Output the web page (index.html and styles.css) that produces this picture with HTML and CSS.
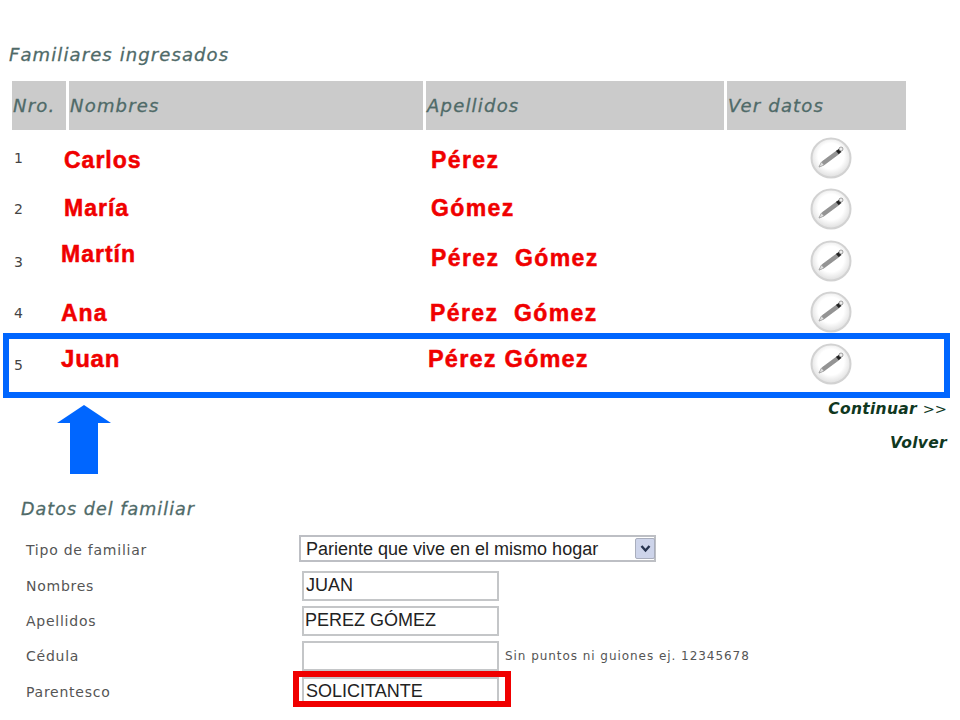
FILE: index.html
```html
<!DOCTYPE html>
<html lang="en">
<head>
    <meta charset="UTF-8" />
    <title>Familiares ingresados</title>
    <link rel="stylesheet" href="styles.css">
</head>
<body>

<!-- pencil button used by every row -->
<svg class="defs" width="0" height="0">
    <defs>
        <radialGradient id="knob" cx="50%" cy="45%" r="55%">
            <stop offset="0.6" stop-color="#ffffff"/>
            <stop offset="1" stop-color="#dedede"/>
        </radialGradient>
    </defs>
    <symbol id="pencil" viewBox="0 0 42 42">
        <circle cx="21" cy="21" r="19.5" fill="url(#knob)" stroke="#d2d2d2" stroke-width="2"/>
        <path d="M9 30 L11.5 25 L27 13.5 L29.5 16.5 L14 28 Z" fill="#949494" stroke="#7a7a7a" stroke-width="0.5"/>
        <path d="M9 30 L11.5 25 L14 28 Z" fill="#e0e0e0" stroke="#9a9a9a" stroke-width="0.5"/>
        <path d="M26 14 L29 11.8 L31.5 15 L28.6 17 Z" fill="#222222"/>
        <circle cx="31" cy="12" r="2" fill="#eeeeee" stroke="#666" stroke-width="0.6"/>
    </symbol>
</svg>

<h2 class="section-title">Familiares ingresados</h2>

<div class="table-head">
    <div>Nro.</div>
    <div>Nombres</div>
    <div>Apellidos</div>
    <div>Ver datos</div>
</div>

<div class="rows">
    <div class="row row-1">
        <span class="num">1</span>
        <span class="name">Carlos</span>
        <span class="surname">Pérez</span>
        <svg class="edit"><use href="#pencil"/></svg>
    </div>
    <div class="row row-2">
        <span class="num">2</span>
        <span class="name">María</span>
        <span class="surname">Gómez</span>
        <svg class="edit"><use href="#pencil"/></svg>
    </div>
    <div class="row row-3">
        <span class="num">3</span>
        <span class="name">Martín</span>
        <span class="surname">Pérez&nbsp; Gómez</span>
        <svg class="edit"><use href="#pencil"/></svg>
    </div>
    <div class="row row-4">
        <span class="num">4</span>
        <span class="name">Ana</span>
        <span class="surname">Pérez&nbsp; Gómez</span>
        <svg class="edit"><use href="#pencil"/></svg>
    </div>
    <div class="row row-5">
        <span class="num">5</span>
        <span class="name">Juan</span>
        <span class="surname">Pérez Gómez</span>
        <svg class="edit"><use href="#pencil"/></svg>
    </div>
</div>

<div class="links">
    <a href="#">Continuar <span class="arrows">&gt;&gt;</span></a>
    <a href="#">Volver</a>
</div>

<h2 class="section-title sub">Datos del familiar</h2>

<form class="family-form">
    <label>Tipo de familiar</label>
    <div class="select-wrap">
        <select>
            <option>Pariente que vive en el mismo hogar</option>
        </select>
        <span class="select-btn">
            <svg width="11" height="9" viewBox="0 0 11 9"><path d="M1.5 2 L5.5 6.5 L9.5 2" fill="none" stroke="#27344f" stroke-width="2.4"/></svg>
        </span>
    </div>

    <label>Nombres</label>
    <div><input class="pad" type="text" value="JUAN"></div>

    <label>Apellidos</label>
    <div><input type="text" value="PEREZ GÓMEZ"></div>

    <label>Cédula</label>
    <div class="with-hint"><input type="text"><span class="hint">Sin puntos ni guiones ej. 12345678</span></div>

    <label>Parentesco</label>
    <div><input class="pad" type="text" value="SOLICITANTE"></div>
</form>

<!-- annotations drawn on top of the page -->
<div class="mark-blue"></div>
<svg class="mark-arrow" width="54" height="69" viewBox="0 0 54 69">
    <path d="M27 0 L54 18 L41 18 L41 69 L13 69 L13 18 L0 18 Z" fill="#0066ff"/>
</svg>
<div class="mark-red"></div>

</body>
</html>
```

FILE: styles.css
```css
body {
    margin: 0;
    font-family: "DejaVu Sans", Verdana, sans-serif;
    background-color: #ffffff;
    color: #444;
    position: relative;
    height: 720px;
    overflow: hidden;
}

.defs {
    position: absolute;
}

.section-title {
    margin: 0;
    padding: 45px 0 0 9px;
    height: 36px;
    font-size: 18px;
    line-height: 20px;
    letter-spacing: 1.1px;
    font-weight: normal;
    font-style: italic;
    color: #4f6a68;
    -webkit-text-stroke: 0.3px #4f6a68;
}

.section-title.sub {
    padding: 0 0 0 21px;
    height: 34px;
    margin-top: 46px;
    font-size: 17.5px;
    letter-spacing: 1.05px;
}

.table-head {
    display: grid;
    grid-template-columns: 54px 354px 298px 179px;
    column-gap: 3px;
    margin-left: 12px;
    height: 49px;
}

.table-head div {
    background-color: #cbcbcb;
    color: #4f6a68;
    font-style: italic;
    font-size: 18px;
    letter-spacing: 1.2px;
    line-height: 49px;
    padding-left: 1px;
    -webkit-text-stroke: 0.3px #4f6a68;
}

.rows {
    margin-top: 2px;
}

.row {
    display: grid;
    grid-template-columns: 49px 367px 382px 42px;
    margin-left: 12px;
    height: 51.5px;
    align-items: center;
}

.num {
    padding-left: 2px;
    font-size: 14px;
    color: #444;
}

.name, .surname {
    color: #f00000;
    font-family: "Liberation Sans", Arial, sans-serif;
    font-weight: bold;
    font-size: 23px;
    letter-spacing: 1px;
    white-space: nowrap;
    -webkit-text-stroke: 0.5px #f00000;
}

.surname {
    letter-spacing: 1.4px;
}

.edit {
    width: 42px;
    height: 42px;
}

/* the red names were typed over the original by hand, so each row sits a little off */
.row-1 .name, .row-2 .name { margin-left: 3px; }
.row-1 .surname, .row-2 .surname, .row-3 .surname { margin-left: 3px; }
.row-4 .surname { margin-left: 2px; }
.row-1 .name, .row-1 .surname { padding-top: 5px; }
.row-2 .name, .row-2 .surname { padding-bottom: 1px; }
.row-3 .name { padding-bottom: 12px; }
.row-3 .surname { padding-bottom: 4px; }
.row-3 .num, .row-4 .num, .row-5 .num { padding-top: 2px; }
.row-4 .name, .row-4 .surname { padding-top: 2px; }
.row-5 .name { padding-bottom: 9px; font-size: 24px; letter-spacing: 0.8px; }
.row-5 .surname { padding-bottom: 8px; font-size: 23.5px; letter-spacing: 1.2px; }

.links {
    margin-top: 10px;
    padding-right: 13px;
    display: flex;
    flex-direction: column;
    align-items: flex-end;
    gap: 15px;
}

.links a {
    color: #10381f;
    font-size: 15.5px;
    letter-spacing: 0.3px;
    line-height: 19px;
    font-weight: bold;
    font-style: italic;
    text-decoration: none;
}

.links .arrows {
    font-size: 14.5px;
    letter-spacing: 0;
    font-weight: normal;
    font-style: normal;
}

.family-form {
    display: grid;
    grid-template-columns: 273px 1fr;
    grid-auto-rows: 35.4px;
    align-items: center;
    padding-left: 26px;
}

.family-form label {
    font-size: 14px;
    letter-spacing: 0.75px;
    color: #555;
}

.select-wrap {
    position: relative;
    width: 357px;
    height: 27px;
    margin-bottom: 3px;
}

select {
    appearance: none;
    width: 100%;
    height: 100%;
    box-sizing: border-box;
    padding: 0 0 0 5px;
    border: 2px solid #bdbfc4;
    border-radius: 0;
    background-color: #fff;
    font-family: "Liberation Sans", Arial, sans-serif;
    font-size: 18px;
    color: #222;
}

.select-btn {
    position: absolute;
    right: 1px;
    top: 3px;
    width: 20px;
    height: 21px;
    display: flex;
    align-items: center;
    justify-content: center;
    background-color: #cdd4ea;
    border: 1px solid #a9aebd;
    box-sizing: border-box;
    border-radius: 2px;
}

input[type="text"] {
    display: block;
    margin-left: 3px;
    width: 197px;
    height: 30px;
    box-sizing: border-box;
    padding: 0 1px;
    border: 2px solid #c4c6c8;
    border-radius: 0;
    background-color: #fff;
    font-family: "Liberation Sans", Arial, sans-serif;
    font-size: 18px;
    color: #222;
}

input[type="text"].pad {
    padding: 0 2px;
}

.with-hint {
    display: flex;
    align-items: center;
    gap: 6px;
}

.hint {
    font-size: 12px;
    letter-spacing: 0.95px;
    color: #555;
    white-space: nowrap;
}

.mark-blue {
    position: absolute;
    left: 3px;
    top: 333px;
    width: 947px;
    height: 65px;
    box-sizing: border-box;
    border: 6px solid #0066ff;
}

.mark-arrow {
    position: absolute;
    left: 57px;
    top: 405px;
}

.mark-red {
    position: absolute;
    left: 293px;
    top: 671px;
    width: 218px;
    height: 36px;
    box-sizing: border-box;
    border: 6px solid #f00000;
}
```
